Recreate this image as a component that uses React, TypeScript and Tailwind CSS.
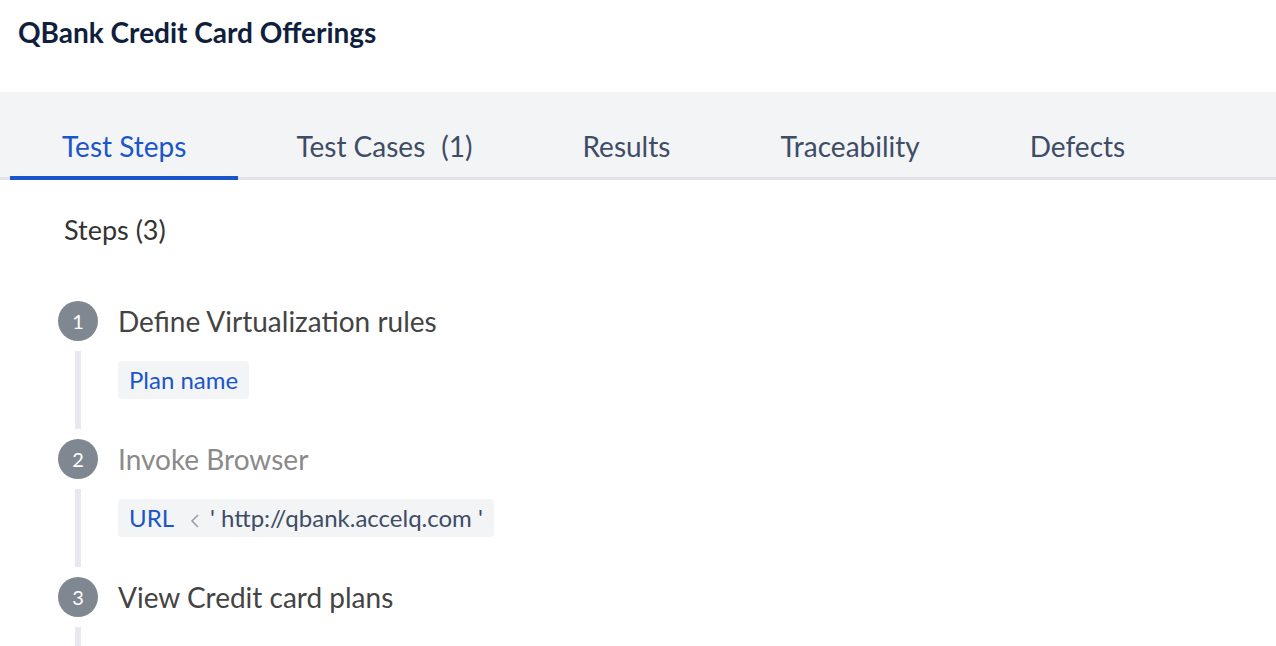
import React from "react";

const tabs = [
  { label: "Test Steps", count: null as string | null, active: true },
  { label: "Test Cases", count: "(1)", active: false },
  { label: "Results", count: null, active: false },
  { label: "Traceability", count: null, active: false },
  { label: "Defects", count: null, active: false },
];

function StepCircle({ n }: { n: number }) {
  return (
    <div className="w-10 h-10 rounded-full bg-[#7f8790] text-white flex items-center justify-center text-[20px] flex-none">
      {n}
    </div>
  );
}

function StepHeader({ n, title, muted }: { n: number; title: string; muted?: boolean }) {
  return (
    <div className="flex items-center gap-[20px] h-10">
      <StepCircle n={n} />
      <span className={`text-[28px] leading-[40px] ${muted ? "text-[#8a8a8a]" : "text-[#444]"}`}>
        {title}
      </span>
    </div>
  );
}

function Rail({ children }: { children?: React.ReactNode }) {
  return (
    <div className="flex my-[10px] h-[78px]">
      <div className="w-[20px] flex-none flex justify-end">
        <div className="w-[6px] h-[78px] bg-[#e8e9ee] mr-[-3px]" />
      </div>
      <div className="pl-[40px] pt-[10px]">{children}</div>
    </div>
  );
}

function Chip({ children }: { children: React.ReactNode }) {
  return (
    <span className="inline-flex items-center h-[38px] px-[11px] rounded bg-[#f3f4f6] text-[24px] leading-none">
      {children}
    </span>
  );
}

export default function App() {
  return (
    <div className="w-[1276px] h-[646px] overflow-hidden bg-white font-['Lato',sans-serif]">
      <div className="h-[92px] pl-[18px] pt-[14px]">
        <h1 className="text-[28px] font-bold text-[#0f1f3d] leading-[36px]">
          QBank Credit Card Offerings
        </h1>
      </div>

      <div className="bg-[#f3f4f6] border-b-[3px] border-[#e1e3e8] pl-[10px] flex gap-[6px] h-[88px]">
        {tabs.map((t) => (
          <div
            key={t.label}
            className={`px-[52px] h-[88px] flex items-center text-[28px] border-b-4 pt-[24px] ${
              t.active
                ? "border-[#1a56c9] text-[#1a56c9]"
                : "border-transparent text-[#3e4c66]"
            }`}
          >
            {t.label}
            {t.count && <span className="ml-[16px]">{t.count}</span>}
          </div>
        ))}
      </div>

      <div className="pl-[64px] pt-[35px] text-[27px] text-[#333] leading-[30px]">Steps (3)</div>

      <div className="pl-[58px] pt-[56px]">
        <StepHeader n={1} title="Define Virtualization rules" />
        <Rail>
          <Chip>
            <span className="text-[#1a56c9]">Plan name</span>
          </Chip>
        </Rail>

        <StepHeader n={2} title="Invoke Browser" muted />
        <Rail>
          <Chip>
            <span className="text-[#1a56c9]">URL</span>
            <svg width="10" height="18" viewBox="0 0 10 18" className="ml-[16px] mr-[10px] mt-[4px]">
              <path d="M8 4 L2 10 L8 16" fill="none" stroke="#9aa0a8" strokeWidth="1.6" />
            </svg>
            <span className="text-[#3e4c66]">' http://qbank.accelq.com '</span>
          </Chip>
        </Rail>

        <StepHeader n={3} title="View Credit card plans" />
        <Rail />
      </div>
    </div>
  );
}
